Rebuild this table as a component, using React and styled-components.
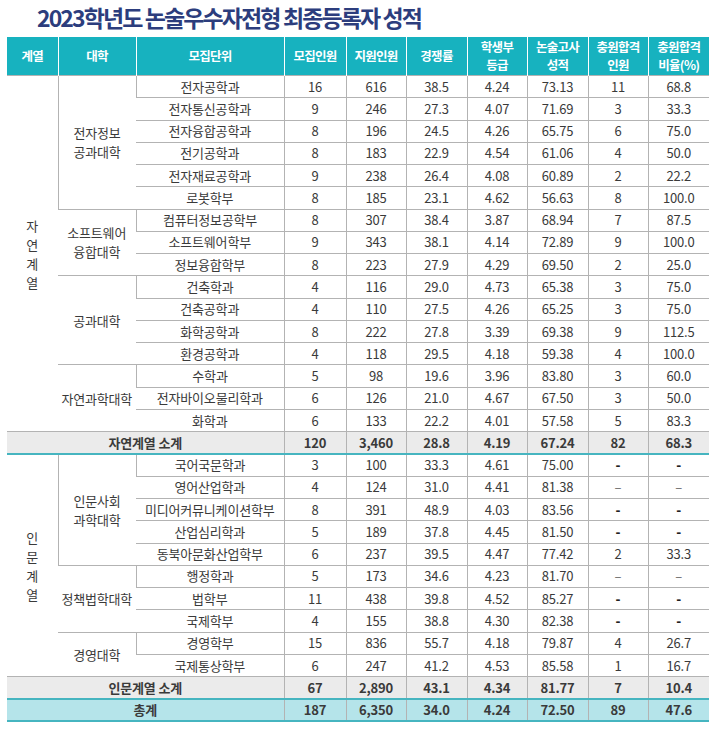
import React from "react";
import styled, { createGlobalStyle } from "styled-components";

const Global = createGlobalStyle`
  html, body { margin: 0; padding: 0; background: #fff; }
  body { font-family: "Noto Sans CJK KR", "Noto Sans", sans-serif; }
`;

const Page = styled.div`
  width: 716px;
  padding: 0 7px;
  box-sizing: border-box;
`;

const Title = styled.h1`
  margin: 0;
  padding: 0 0 0 30px;
  height: 37px;
  box-sizing: border-box;
  font-size: 23px;
  line-height: 34px;
  font-weight: 700;
  letter-spacing: -1.9px;
  color: #2c3d7d;
  white-space: nowrap;
`;

const Table = styled.table`
  width: 702px;
  border-collapse: collapse;
  table-layout: fixed;
  font-size: 13px;
  color: #3a3a3a;
`;

const HeadCell = styled.th`
  background: #17b2bf;
  color: #fff;
  font-weight: 700;
  font-size: 12.5px;
  line-height: 18px;
  letter-spacing: -0.7px;
  height: 38px;
  padding: 0;
  text-align: center;
  border-left: 1px solid #ffffff;
  &:first-child { border-left: none; }
`;

const Row = styled.tr`
  height: 22.28px;
  background: ${(p) => (p.$kind === "sub" ? "#ebebeb" : p.$kind === "total" ? "#b5e4ea" : "#fff")};
  font-weight: ${(p) => (p.$kind ? 700 : 400)};
  border-bottom: ${(p) => (p.$kind ? "2px solid #46b5c0" : "1px solid #b3b3b3")};
`;

const Cell = styled.td`
  padding: 0;
  text-align: center;
  line-height: 16px;
  border-left: 1px solid #b3b3b3;
  border-top: 1px solid #b3b3b3;
  &:first-child { border-left: none; }
  white-space: nowrap;
  letter-spacing: -0.2px;
`;

const CollegeName = styled.div`
  line-height: 19px;
`;

const Vertical = styled.div`
  display: flex;
  flex-direction: column;
  align-items: center;
  line-height: 19px;
`;

const Dash = styled.span`
  font-weight: ${(p) => (p.$thin ? 400 : 900)};
  color: ${(p) => (p.$thin ? "#666" : "#222")};
`;

const groups = [
  {
    field: "자연계열",
    colleges: [
      {
        name: ["전자정보", "공과대학"],
        rows: [
          ["전자공학과", "16", "616", "38.5", "4.24", "73.13", "11", "68.8"],
          ["전자통신공학과", "9", "246", "27.3", "4.07", "71.69", "3", "33.3"],
          ["전자융합공학과", "8", "196", "24.5", "4.26", "65.75", "6", "75.0"],
          ["전기공학과", "8", "183", "22.9", "4.54", "61.06", "4", "50.0"],
          ["전자재료공학과", "9", "238", "26.4", "4.08", "60.89", "2", "22.2"],
          ["로봇학부", "8", "185", "23.1", "4.62", "56.63", "8", "100.0"],
        ],
      },
      {
        name: ["소프트웨어", "융합대학"],
        rows: [
          ["컴퓨터정보공학부", "8", "307", "38.4", "3.87", "68.94", "7", "87.5"],
          ["소프트웨어학부", "9", "343", "38.1", "4.14", "72.89", "9", "100.0"],
          ["정보융합학부", "8", "223", "27.9", "4.29", "69.50", "2", "25.0"],
        ],
      },
      {
        name: ["공과대학"],
        rows: [
          ["건축학과", "4", "116", "29.0", "4.73", "65.38", "3", "75.0"],
          ["건축공학과", "4", "110", "27.5", "4.26", "65.25", "3", "75.0"],
          ["화학공학과", "8", "222", "27.8", "3.39", "69.38", "9", "112.5"],
          ["환경공학과", "4", "118", "29.5", "4.18", "59.38", "4", "100.0"],
        ],
      },
      {
        name: ["자연과학대학"],
        rows: [
          ["수학과", "5", "98", "19.6", "3.96", "83.80", "3", "60.0"],
          ["전자바이오물리학과", "6", "126", "21.0", "4.67", "67.50", "3", "50.0"],
          ["화학과", "6", "133", "22.2", "4.01", "57.58", "5", "83.3"],
        ],
      },
    ],
    sub: ["자연계열 소계", "120", "3,460", "28.8", "4.19", "67.24", "82", "68.3"],
  },
  {
    field: "인문계열",
    colleges: [
      {
        name: ["인문사회", "과학대학"],
        rows: [
          ["국어국문학과", "3", "100", "33.3", "4.61", "75.00", "-", "-"],
          ["영어산업학과", "4", "124", "31.0", "4.41", "81.38", "–", "–"],
          ["미디어커뮤니케이션학부", "8", "391", "48.9", "4.03", "83.56", "-", "-"],
          ["산업심리학과", "5", "189", "37.8", "4.45", "81.50", "-", "-"],
          ["동북아문화산업학부", "6", "237", "39.5", "4.47", "77.42", "2", "33.3"],
        ],
      },
      {
        name: ["정책법학대학"],
        rows: [
          ["행정학과", "5", "173", "34.6", "4.23", "81.70", "–", "–"],
          ["법학부", "11", "438", "39.8", "4.52", "85.27", "-", "-"],
          ["국제학부", "4", "155", "38.8", "4.30", "82.38", "-", "-"],
        ],
      },
      {
        name: ["경영대학"],
        rows: [
          ["경영학부", "15", "836", "55.7", "4.18", "79.87", "4", "26.7"],
          ["국제통상학부", "6", "247", "41.2", "4.53", "85.58", "1", "16.7"],
        ],
      },
    ],
    sub: ["인문계열 소계", "67", "2,890", "43.1", "4.34", "81.77", "7", "10.4"],
  },
];

const total = ["총계", "187", "6,350", "34.0", "4.24", "72.50", "89", "47.6"];

const widths = [51, 78, 148, 62, 60, 61, 60, 61, 60, 61];

const renderValue = (v) => {
  if (v === "-") return <Dash>-</Dash>;
  if (v === "–") return <Dash $thin>–</Dash>;
  return v;
};

export default function App() {
  const body = [];
  groups.forEach((g, gi) => {
    const count = g.colleges.reduce((s, c) => s + c.rows.length, 0);
    let first = true;
    g.colleges.forEach((c, ci) => {
      c.rows.forEach((r, ri) => {
        body.push(
          <Row key={`${gi}-${ci}-${ri}`}>
            {first && (
              <Cell rowSpan={count}>
                <Vertical>
                  {g.field.split("").map((ch, i) => (
                    <span key={i}>{ch}</span>
                  ))}
                </Vertical>
              </Cell>
            )}
            {ri === 0 && (
              <Cell rowSpan={c.rows.length}>
                {c.name.map((n, i) => (
                  <CollegeName key={i}>{n}</CollegeName>
                ))}
              </Cell>
            )}
            {r.map((v, vi) => (
              <Cell key={vi}>{renderValue(v)}</Cell>
            ))}
          </Row>
        );
        first = false;
      });
    });
    body.push(
      <Row key={`sub-${gi}`} $kind="sub">
        <Cell colSpan={3}>{g.sub[0]}</Cell>
        {g.sub.slice(1).map((v, i) => (
          <Cell key={i}>{v}</Cell>
        ))}
      </Row>
    );
  });
  body.push(
    <Row key="total" $kind="total">
      <Cell colSpan={3}>{total[0]}</Cell>
      {total.slice(1).map((v, i) => (
        <Cell key={i}>{v}</Cell>
      ))}
    </Row>
  );

  return (
    <Page>
      <Global />
      <Title>2023학년도 논술우수자전형 최종등록자 성적</Title>
      <Table>
        <colgroup>
          {widths.map((w, i) => (
            <col key={i} style={{ width: w }} />
          ))}
        </colgroup>
        <thead>
          <tr>
            <HeadCell>계열</HeadCell>
            <HeadCell>대학</HeadCell>
            <HeadCell>모집단위</HeadCell>
            <HeadCell>모집인원</HeadCell>
            <HeadCell>지원인원</HeadCell>
            <HeadCell>경쟁률</HeadCell>
            <HeadCell>학생부<br />등급</HeadCell>
            <HeadCell>논술고사<br />성적</HeadCell>
            <HeadCell>충원합격<br />인원</HeadCell>
            <HeadCell>충원합격<br />비율(%)</HeadCell>
          </tr>
        </thead>
        <tbody>{body}</tbody>
      </Table>
    </Page>
  );
}
